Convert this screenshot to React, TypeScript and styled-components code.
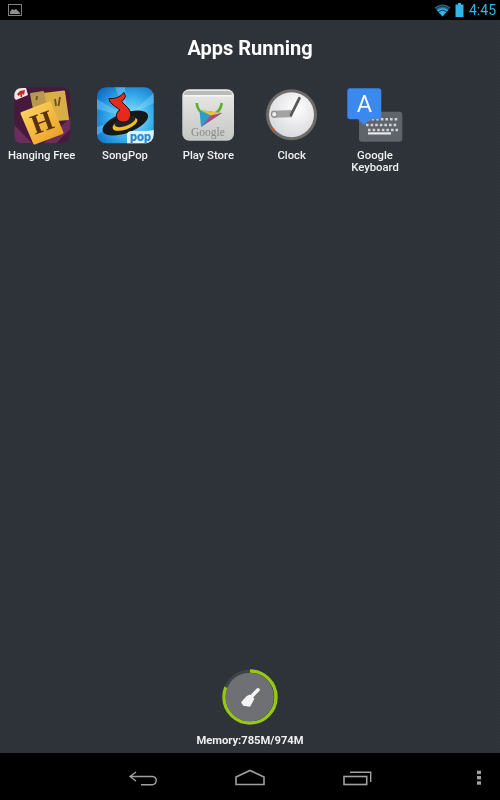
import React from "react";
import styled, { createGlobalStyle } from "styled-components";

const Global = createGlobalStyle`
  html, body { margin: 0; padding: 0; background: #000; }
  body { font-family: Roboto, "Liberation Sans", sans-serif; }
  #root { width: 500px; height: 800px; }
`;

const Screen = styled.div`
  width: 500px;
  height: 800px;
  display: flex;
  flex-direction: column;
  overflow: hidden;
`;

const StatusBar = styled.header`
  height: 20px;
  background: #000;
  display: flex;
  align-items: center;
  justify-content: space-between;
  padding: 0 4px 0 8px;
  flex: none;
`;

const StatusRight = styled.div`
  display: flex;
  align-items: center;
`;

const BatteryIcon = styled.svg`
  width: 9px;
  height: 14px;
  margin-left: 4px;
`;

const Time = styled.span`
  color: #33b5e5;
  font-size: 14px;
  width: 27px;
  margin-left: 5px;
  text-align: right;
  line-height: 20px;
  filter: blur(0.3px);
`;

const Main = styled.main`
  flex: 1;
  display: flex;
  flex-direction: column;
  align-items: stretch;
  background-color: #2e3339;
  background-image: radial-gradient(#31363c 1px, transparent 1px);
  background-size: 3px 3px;
`;

const Title = styled.h1`
  margin: 0;
  height: 63px;
  padding-top: 16px;
  box-sizing: border-box;
  text-align: center;
  color: #fff;
  font-size: 20px;
  line-height: 24px;
  font-weight: 700;
  filter: blur(0.25px);
`;

const AppGrid = styled.ul`
  list-style: none;
  margin: 0;
  padding: 0;
  display: grid;
  grid-template-columns: repeat(6, 83.33px);
`;

const AppItem = styled.li`
  display: flex;
  flex-direction: column;
  align-items: center;
`;

const AppIcon = styled.svg`
  width: 64px;
  height: 64px;
  display: block;
  filter: blur(0.45px);
`;

const AppLabel = styled.span`
  margin-top: 3px;
  width: 80px;
  text-align: center;
  color: #eef0f0;
  font-size: 11.3px;
  line-height: 12px;
  font-weight: 500;
  filter: blur(0.25px);
`;

const Spacer = styled.div`
  flex: 1;
`;

const Cleaner = styled.section`
  display: flex;
  flex-direction: column;
  align-items: center;
  padding-bottom: 5px;
`;

const MemoryRing = styled.svg`
  width: 60px;
  height: 60px;
  display: block;
  filter: blur(0.3px);
`;

const MemoryLabel = styled.span`
  margin-top: 7px;
  color: #eef0f0;
  font-size: 11.2px;
  line-height: 14px;
  font-weight: 700;
  filter: blur(0.25px);
`;

const NavBar = styled.nav`
  height: 47px;
  flex: none;
  background: #000;
  display: grid;
  grid-template-columns: repeat(3, 106.67px);
  padding-left: 90px;
  position: relative;
`;

const NavSlot = styled.div`
  display: flex;
  align-items: center;
  justify-content: center;
`;

const NavIcon = styled.svg`
  width: 40px;
  height: 26px;
  display: block;
  filter: blur(0.35px);
`;

const Overflow = styled.svg`
  position: absolute;
  right: 18px;
  top: 17px;
  width: 6px;
  height: 16px;
  filter: blur(0.3px);
`;

const Hanging = () => (
  <AppIcon viewBox="0 0 64 64">
    <defs>
      <linearGradient id="hTile" x1="0" y1="0" x2="1" y2="1">
        <stop offset="0" stopColor="#fcd963" />
        <stop offset="1" stopColor="#ea9a20" />
      </linearGradient>
    </defs>
    <rect x="4.3" y="4.3" width="56" height="56" rx="9" fill="#471a3d" />
    <path d="M4.3 42 L22 60.3 L12 60.3 Q4.3 60.3 4.3 52Z M46 60.3 L60.3 46 L60.3 34 L34 60.3Z" fill="#6b2d5c" />
    <path d="M33 11 L54 8.5 L58 36 L37 38Z" fill="#d9ae45" stroke="#d9ae45" strokeWidth="2" strokeLinejoin="round" />
    <path d="M21 11 L33 9 L36 24 L24 26Z" fill="#b99a4c" stroke="#b99a4c" strokeWidth="2" strokeLinejoin="round" />
    <path d="M45 16 L46 23 M50 14 L48.5 23 M27 13 L26.5 17" stroke="#6e5220" strokeWidth="1.8" />
    <path d="M12 30.5 L39.5 20 L52 49.5 L24.5 60Z" fill="url(#hTile)" stroke="url(#hTile)" strokeWidth="3" strokeLinejoin="round" />
    <text x="32" y="48.5" textAnchor="middle" fontFamily="'Liberation Serif', serif" fontSize="28" fontWeight="700" fill="#5a3110" transform="rotate(-20 32 39)">H</text>
    <path d="M4.3 13 Q4.3 5 12 5 L16 5 L18 12 L6 17 L4.3 15Z" fill="#ece8e4" />
    <path d="M7 11 L10 8 L15 7 L14 12 L12.5 10.5 L12 14 L10.5 14 L10.5 11.5 L8.5 13Z" fill="#c4252a" />
  </AppIcon>
);

const SongPop = () => (
  <AppIcon viewBox="0 0 64 64">
    <defs>
      <radialGradient id="spBg" cx="0.6" cy="0.55" r="0.72">
        <stop offset="0" stopColor="#a5e8fc" />
        <stop offset="0.5" stopColor="#3cb2ec" />
        <stop offset="1" stopColor="#0d6fca" />
      </radialGradient>
    </defs>
    <rect x="4" y="4.3" width="56.7" height="56" rx="9" fill="url(#spBg)" />
    <path d="M34 34 L4 16 L4 26Z M34 34 L22 4.3 L32 4.3Z M34 34 L60.7 10 L60.7 20Z M34 34 L4 44 L4 52Z" fill="#8adaf8" opacity="0.4" />
    <ellipse cx="32.3" cy="40" rx="24" ry="10" fill="#17181c" transform="rotate(-20 32.3 40)" />
    <ellipse cx="32" cy="41" rx="13" ry="5.5" fill="#f1c21d" transform="rotate(-20 32 41)" />
    <ellipse cx="32" cy="38.5" rx="11" ry="4.5" fill="#222327" transform="rotate(-20 32 38.5)" />
    <path d="M16 15.5 Q25 16.5 31 9.5 L32.5 13.5 Q31 17.5 28.5 18.5 L36 26 Q40 32 35 38 Q28 41 24 36 Q22 29 27 27 L20 22 Q16 19 16 15.5Z" fill="#e5291d" stroke="#17181c" strokeWidth="1" />
    <path d="M60.7 47 L60.7 51 Q60.7 60.3 51 60.3 L34 60.3 L34 52 Q34 48 39 48 L50 48 Q56 48 60.7 47Z" fill="#dff0f8" />
    <text x="47.5" y="58" textAnchor="middle" fontFamily="Roboto, sans-serif" fontSize="12.5" fontWeight="900" fill="#2a8bcb">pop</text>
  </AppIcon>
);

const PlayStore = () => (
  <AppIcon viewBox="0 0 64 64">
    <defs>
      <linearGradient id="psBag" x1="0" y1="0" x2="0" y2="1">
        <stop offset="0" stopColor="#e9e9e6" />
        <stop offset="1" stopColor="#c6c8c6" />
      </linearGradient>
    </defs>
    <rect x="6.3" y="6.3" width="51.7" height="51.4" rx="7" fill="url(#psBag)" />
    <path d="M8 12 Q8 8 12 8 L52 8 Q56 8 56 12Z" fill="#b9bcb8" />
    <rect x="8" y="12" width="48" height="1.5" fill="#f5f5f3" />
    <path d="M20.7 20 C22 36 44 36 45.7 20" fill="none" stroke="#5cb030" strokeWidth="2.6" />
    <path d="M23.5 27 L25 44 L46 30Z" fill="#2d9fc2" />
    <path d="M23.5 27 L35 32.5 L46 30Z" fill="#e9c437" />
    <path d="M25 44 L35 32.5 L46 30Z" fill="#b8428a" />
    <text x="32" y="52.5" textAnchor="middle" fontFamily="'Liberation Serif', serif" fontSize="11.5" fill="#858988">Google</text>
  </AppIcon>
);

const ClockIcon = () => (
  <AppIcon viewBox="0 0 64 64">
    <defs>
      <radialGradient id="clFace" cx="0.6" cy="0.35" r="0.75">
        <stop offset="0" stopColor="#ffffff" />
        <stop offset="1" stopColor="#d4d5da" />
      </radialGradient>
    </defs>
    <circle cx="31.5" cy="31.7" r="25.5" fill="#6f6b68" />
    <circle cx="31.5" cy="31.7" r="22.5" fill="url(#clFace)" />
    <path d="M12 27.7 L33.3 27 L32 34.3 L13 34.7 Q10 31 12 27.7Z" fill="#a3a3a4" />
    <path d="M31 32 L39.3 15.3" stroke="#5a5753" strokeWidth="2.8" strokeLinecap="round" />
    <circle cx="14.3" cy="31.3" r="2.8" fill="#ececea" stroke="#8a8a8a" strokeWidth="1.2" />
    <circle cx="13" cy="46.3" r="1.3" fill="#d8552a" />
  </AppIcon>
);

const KeyboardIcon = () => (
  <AppIcon viewBox="0 0 64 64">
    <rect x="16" y="28.7" width="43.3" height="30" rx="3" fill="#5f636a" />
    <path d="M24 36.3h31M23 42h32M25 47h30" stroke="#d0d3d7" strokeWidth="2.6" strokeDasharray="2.6 2" fill="none" />
    <rect x="25" y="49.3" width="23" height="2.2" fill="#e8eaec" />
    <path d="M7.3 5.3 L35.3 5.3 Q38.3 5.3 38.3 8.3 L38.3 33.3 Q38.3 36.3 35.3 36.3 L27 36.3 L21 42 L15 36.3 L7.3 36.3 Q4.3 36.3 4.3 33.3 L4.3 8.3 Q4.3 5.3 7.3 5.3Z" fill="#3b88ef" />
    <text x="21.3" y="28.7" textAnchor="middle" fontFamily="Roboto, sans-serif" fontSize="23.5" fontWeight="400" fill="#f2f7fe">A</text>
  </AppIcon>
);

const apps = [
  { name: "Hanging Free", Icon: Hanging },
  { name: "SongPop", Icon: SongPop },
  { name: "Play Store", Icon: PlayStore },
  { name: "Clock", Icon: ClockIcon },
  { name: "Google Keyboard", Icon: KeyboardIcon },
];

const circumference = 2 * Math.PI * 26;
const used = 785 / 974;

export default function App() {
  return (
    <Screen>
      <Global />
      <StatusBar>
        <svg width="14" height="12" viewBox="0 0 14 12">
          <rect x="0.5" y="0.5" width="13" height="11" fill="none" stroke="#808080" />
          <path d="M2 10 L2 8 L4 5 L6 6 L8 5 L12 9 L12 10Z" fill="#8f8f8f" />
        </svg>
        <StatusRight>
          <svg width="17" height="13" viewBox="0 0 17 13">
            <path d="M0.5 3.6 Q8.5 -2.6 16.5 3.6 L8.5 12.5Z" fill="#1f6e8c" />
            <path d="M3 6.3 Q8.5 2 14 6.3 L8.5 12.5Z" fill="#33b5e5" />
            <path d="M2 4.6 Q8.5 -0.2 15 4.6 M4.4 7.6 Q8.5 4.6 12.6 7.6" stroke="#0a2b38" strokeWidth="0.9" fill="none" />
          </svg>
          <BatteryIcon viewBox="0 0 9 14">
            <path d="M3 0 H6 V1.5 H8.5 V14 H0.5 V1.5 H3Z" fill="#33b5e5" />
          </BatteryIcon>
          <Time>4:45</Time>
        </StatusRight>
      </StatusBar>
      <Main>
        <Title>Apps Running</Title>
        <AppGrid>
          {apps.map(({ name, Icon }) => (
            <AppItem key={name}>
              <Icon />
              <AppLabel>{name}</AppLabel>
            </AppItem>
          ))}
        </AppGrid>
        <Spacer />
        <Cleaner>
          <MemoryRing viewBox="0 0 60 60">
            <circle cx="30" cy="30" r="26" fill="none" stroke="#3f444a" strokeWidth="3" />
            <circle
              cx="30"
              cy="30"
              r="26"
              fill="none"
              stroke="#97c70f"
              strokeWidth="3.4"
              strokeDasharray={`${circumference * used} ${circumference}`}
              transform="rotate(-90 30 30)"
            />
            <circle cx="29.7" cy="30" r="24.3" fill="#6f7073" />
            <path d="M38 22.8 L32.5 28.5" stroke="#f4f4f4" strokeWidth="3.6" strokeLinecap="round" />
            <path d="M26.7 29 L30 27.4 L34.4 31.6 L32.7 35 L30 39.7 L23.3 38.7 L21 35.3Z" fill="#f4f4f4" />
          </MemoryRing>
          <MemoryLabel>Memory:785M/974M</MemoryLabel>
        </Cleaner>
      </Main>
      <NavBar>
        <NavSlot>
          <NavIcon viewBox="0 0 40 26">
            <path d="M13 8 L7 12.5 L13 17 M7 12.5 H29.5 Q33.2 13 33.2 16.5 Q33.2 20 29.5 20.8 H18" fill="none" stroke="#a0a0a0" strokeWidth="1.4" />
          </NavIcon>
        </NavSlot>
        <NavSlot>
          <NavIcon viewBox="0 0 40 26">
            <path d="M6 13 L20 6.5 L34 13 V20.5 H6Z" fill="none" stroke="#a0a0a0" strokeWidth="1.6" />
          </NavIcon>
        </NavSlot>
        <NavSlot>
          <NavIcon viewBox="0 0 40 26">
            <rect x="7" y="12.5" width="22.7" height="8" fill="none" stroke="#a0a0a0" strokeWidth="1.6" />
            <path d="M13 8.3 H33.7 V18" fill="none" stroke="#a0a0a0" strokeWidth="1.4" />
          </NavIcon>
        </NavSlot>
        <Overflow viewBox="0 0 6 16">
          <rect x="1" y="0.7" width="4" height="3.4" fill="#a0a0a0" />
          <rect x="1" y="6" width="4" height="3.4" fill="#a0a0a0" />
          <rect x="1" y="11.3" width="4" height="3.4" fill="#a0a0a0" />
        </Overflow>
      </NavBar>
    </Screen>
  );
}
